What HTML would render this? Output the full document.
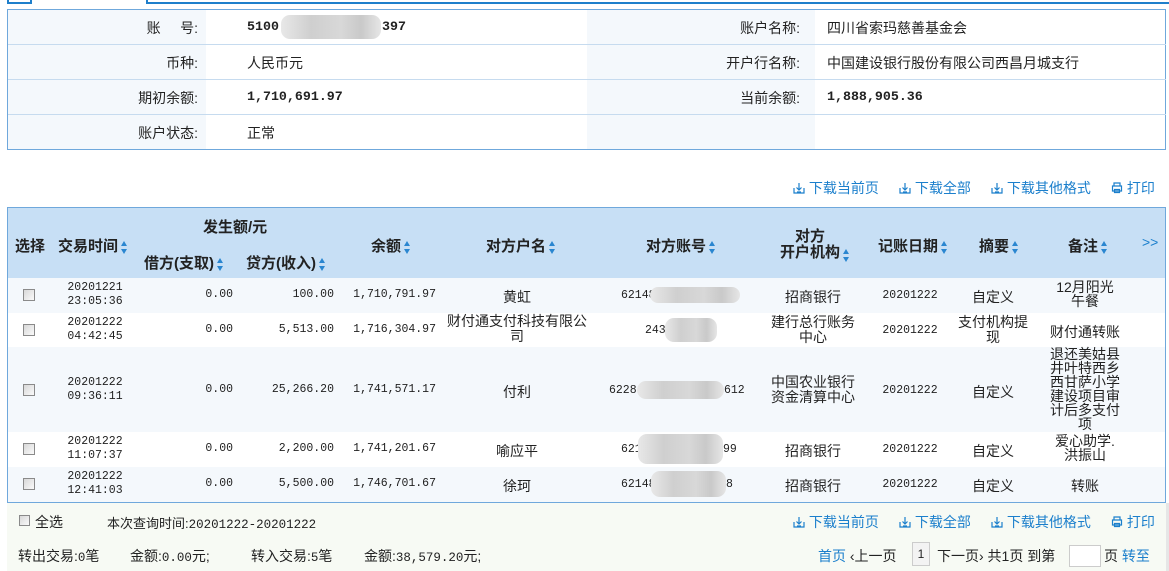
<!DOCTYPE html>
<html><head><meta charset="utf-8"><style>
*{margin:0;padding:0;box-sizing:border-box}
body{width:1169px;height:571px;overflow:hidden;background:#fff;position:relative;font-family:"Liberation Sans","Noto Sans CJK SC",sans-serif;font-size:14px;color:#222}
.a{position:absolute;white-space:nowrap}
.m{font-family:"Liberation Mono","Noto Sans CJK SC",monospace;font-size:11.5px}
.mi{font-family:"Liberation Mono",monospace;font-size:13.3px;font-weight:bold}
.b{font-weight:bold}
.c{text-align:center}
.r{text-align:right}
.lk{color:#1b7fcc}
.blur{position:absolute;background:linear-gradient(90deg,#e8e8e8,#cfcfcf 30%,#d8d8d8 60%,#c9c9c9 80%,#e6e6e6);border-radius:9px}
.cb{position:absolute;width:12px;height:12px;border:1px solid #8a8a8a;background:linear-gradient(135deg,#d8d8d8,#fafafa);left:23px}
.sa{display:inline-block;vertical-align:middle;margin-left:3px}
.hl{position:absolute;left:8px;width:1158px;height:1px;background:#c6dbef}
</style></head><body>
<!-- tabs -->
<div class="a" style="left:7px;top:0;width:2px;height:4px;background:#1f7fcb"></div>
<div class="a" style="left:7px;top:2px;width:24px;height:2px;background:#1f7fcb"></div>
<div class="a" style="left:30px;top:0;width:2px;height:4px;background:#1f7fcb"></div>
<div class="a" style="left:146px;top:0;width:2px;height:4px;background:#1f7fcb"></div>
<div class="a" style="left:146px;top:2px;width:1023px;height:2px;background:#1f7fcb"></div>

<!-- info box -->
<div class="a" style="left:7px;top:9px;width:1159px;height:141px;border:1px solid #6fa8dc;background:#fff"></div>
<div class="a" style="left:8px;top:10px;width:198px;height:139px;background:#f4f8fc"></div>
<div class="a" style="left:587px;top:10px;width:228px;height:139px;background:#f4f8fc"></div>
<div class="hl" style="top:44px"></div>
<div class="hl" style="top:79px"></div>
<div class="hl" style="top:114px"></div>
<div class="a r" style="left:8px;width:190px;top:18px">账&nbsp;&nbsp;&nbsp;&nbsp;&nbsp;号:</div>
<div class="a r" style="left:8px;width:190px;top:53px">币种:</div>
<div class="a r" style="left:8px;width:190px;top:88px">期初余额:</div>
<div class="a r" style="left:8px;width:190px;top:123px">账户状态:</div>
<div class="a mi" style="left:247px;top:19px">5100</div>
<div class="blur" style="left:281px;top:15px;width:100px;height:24px"></div>
<div class="a mi" style="left:382px;top:19px">397</div>
<div class="a" style="left:247px;top:53px">人民币元</div>
<div class="a mi" style="left:247px;top:89px">1,710,691.97</div>
<div class="a" style="left:247px;top:123px">正常</div>
<div class="a r" style="left:590px;width:210px;top:18px">账户名称:</div>
<div class="a r" style="left:590px;width:210px;top:53px">开户行名称:</div>
<div class="a r" style="left:590px;width:210px;top:88px">当前余额:</div>
<div class="a" style="left:827px;top:18px">四川省索玛慈善基金会</div>
<div class="a" style="left:827px;top:53px">中国建设银行股份有限公司西昌月城支行</div>
<div class="a mi" style="left:827px;top:89px">1,888,905.36</div>

<svg width="0" height="0" style="position:absolute"><defs>
<g id="dl"><path d="M1 6v5h10V6M6 1v7M3.5 5.5L6 8l2.5-2.5M4 10h4" fill="none" stroke="#1b7fcc" stroke-width="1.2"/></g>
<g id="pr"><path d="M3 4V1h6v3M1.5 4h9v5h-9zM3.5 7.5h5v3h-5z" fill="none" stroke="#1b7fcc" stroke-width="1.2"/></g>
<g id="sa"><path d="M3 0L6 5H0z" fill="#2a86d0"/><path d="M0 8h6L3 13z" fill="#2a86d0"/></g>
</defs></svg>
<div class="a lk" style="left:793px;top:178px"><svg width="12" height="12" style="vertical-align:-1px"><use href="#dl"/></svg> 下载当前页</div>
<div class="a lk" style="left:899px;top:178px"><svg width="12" height="12" style="vertical-align:-1px"><use href="#dl"/></svg> 下载全部</div>
<div class="a lk" style="left:991px;top:178px"><svg width="12" height="12" style="vertical-align:-1px"><use href="#dl"/></svg> 下载其他格式</div>
<div class="a lk" style="left:1111px;top:178px"><svg width="12" height="12" style="vertical-align:-1px"><use href="#pr"/></svg> 打印</div>

<!-- table -->
<div class="a" style="left:7px;top:207px;width:1159px;height:296px;border:1px solid #6fa8dc;background:#fff"></div>
<div class="a" style="left:8px;top:208px;width:1157px;height:70px;background:#c7dff5"></div>
<div class="a" style="left:8px;top:278px;width:1157px;height:35px;background:#f4f8fc"></div>
<div class="a" style="left:8px;top:347px;width:1157px;height:85px;background:#f4f8fc"></div>
<div class="a" style="left:8px;top:467px;width:1157px;height:35px;background:#f4f8fc"></div>

<div class="a b" style="left:15px;top:235px;font-size:15px">选择</div>
<div class="a b" style="left:58px;top:235px;font-size:15px">交易时间<svg class="sa" width="6" height="13"><use href="#sa"/></svg></div>
<div class="a b" style="left:203px;top:216px;font-size:15px">发生额/元</div>
<div class="a b" style="left:144px;top:252px;font-size:15px">借方(支取)<svg class="sa" width="6" height="13"><use href="#sa"/></svg></div>
<div class="a b" style="left:246px;top:252px;font-size:15px">贷方(收入)<svg class="sa" width="6" height="13"><use href="#sa"/></svg></div>
<div class="a b" style="left:371px;top:235px;font-size:15px">余额<svg class="sa" width="6" height="13"><use href="#sa"/></svg></div>
<div class="a b" style="left:486px;top:235px;font-size:15px">对方户名<svg class="sa" width="6" height="13"><use href="#sa"/></svg></div>
<div class="a b" style="left:646px;top:235px;font-size:15px">对方账号<svg class="sa" width="6" height="13"><use href="#sa"/></svg></div>
<div class="a b c" style="left:780px;width:60px;top:229px;line-height:16px;font-size:15px">对方<br>开户机构</div>
<svg class="a" style="left:843px;top:249px" width="6" height="13"><use href="#sa"/></svg>
<div class="a b" style="left:878px;top:235px;font-size:15px">记账日期<svg class="sa" width="6" height="13"><use href="#sa"/></svg></div>
<div class="a b" style="left:979px;top:235px;font-size:15px">摘要<svg class="sa" width="6" height="13"><use href="#sa"/></svg></div>
<div class="a b" style="left:1068px;top:235px;font-size:15px">备注<svg class="sa" width="6" height="13"><use href="#sa"/></svg></div>
<div class="a lk" style="left:1142px;top:234px;font-size:14px">&gt;&gt;</div>

<div class="cb" style="top:289px"></div>
<div class="cb" style="top:324px"></div>
<div class="cb" style="top:384px"></div>
<div class="cb" style="top:443px"></div>
<div class="cb" style="top:478px"></div>

<div class="a m c" style="left:60px;width:70px;top:281px;line-height:14px">20201221<br>23:05:36</div>
<div class="a m c" style="left:60px;width:70px;top:316px;line-height:14px">20201222<br>04:42:45</div>
<div class="a m c" style="left:60px;width:70px;top:376px;line-height:14px">20201222<br>09:36:11</div>
<div class="a m c" style="left:60px;width:70px;top:435px;line-height:14px">20201222<br>11:07:37</div>
<div class="a m c" style="left:60px;width:70px;top:470px;line-height:14px">20201222<br>12:41:03</div>

<div class="a m r" style="left:150px;width:83px;top:288px">0.00</div>
<div class="a m r" style="left:150px;width:83px;top:323px">0.00</div>
<div class="a m r" style="left:150px;width:83px;top:383px">0.00</div>
<div class="a m r" style="left:150px;width:83px;top:442px">0.00</div>
<div class="a m r" style="left:150px;width:83px;top:477px">0.00</div>

<div class="a m r" style="left:240px;width:94px;top:288px">100.00</div>
<div class="a m r" style="left:240px;width:94px;top:323px">5,513.00</div>
<div class="a m r" style="left:240px;width:94px;top:383px">25,266.20</div>
<div class="a m r" style="left:240px;width:94px;top:442px">2,200.00</div>
<div class="a m r" style="left:240px;width:94px;top:477px">5,500.00</div>

<div class="a m r" style="left:340px;width:96px;top:288px">1,710,791.97</div>
<div class="a m r" style="left:340px;width:96px;top:323px">1,716,304.97</div>
<div class="a m r" style="left:340px;width:96px;top:383px">1,741,571.17</div>
<div class="a m r" style="left:340px;width:96px;top:442px">1,741,201.67</div>
<div class="a m r" style="left:340px;width:96px;top:477px">1,746,701.67</div>

<div class="a c" style="left:447px;width:140px;top:287px">黄虹</div>
<div class="a c" style="left:447px;width:140px;top:314px;line-height:15px;white-space:normal">财付通支付科技有限公司</div>
<div class="a c" style="left:447px;width:140px;top:382px">付利</div>
<div class="a c" style="left:447px;width:140px;top:441px">喻应平</div>
<div class="a c" style="left:447px;width:140px;top:476px">徐珂</div>

<div class="a m" style="left:621px;top:289px">62148</div><div class="blur" style="left:650px;top:287px;width:90px;height:16px"></div>
<div class="a m" style="left:645px;top:324px">243</div><div class="blur" style="left:665px;top:318px;width:52px;height:24px"></div>
<div class="a m" style="left:609px;top:384px">6228</div><div class="blur" style="left:637px;top:381px;width:87px;height:18px"></div><div class="a m" style="left:724px;top:384px">612</div>
<div class="a m" style="left:621px;top:443px">621</div><div class="blur" style="left:638px;top:434px;width:85px;height:30px"></div><div class="a m" style="left:723px;top:443px">99</div>
<div class="a m" style="left:621px;top:478px">62148</div><div class="blur" style="left:651px;top:471px;width:75px;height:26px"></div><div class="a m" style="left:726px;top:478px">8</div>

<div class="a c" style="left:768px;width:90px;top:287px">招商银行</div>
<div class="a c" style="left:768px;width:90px;top:315px;line-height:15px">建行总行账务<br>中心</div>
<div class="a c" style="left:758px;width:110px;top:375px;line-height:15px">中国农业银行<br>资金清算中心</div>
<div class="a c" style="left:768px;width:90px;top:441px">招商银行</div>
<div class="a c" style="left:768px;width:90px;top:476px">招商银行</div>

<div class="a m c" style="left:870px;width:80px;top:289px">20201222</div>
<div class="a m c" style="left:870px;width:80px;top:324px">20201222</div>
<div class="a m c" style="left:870px;width:80px;top:384px">20201222</div>
<div class="a m c" style="left:870px;width:80px;top:443px">20201222</div>
<div class="a m c" style="left:870px;width:80px;top:478px">20201222</div>

<div class="a c" style="left:953px;width:80px;top:287px">自定义</div>
<div class="a c" style="left:953px;width:80px;top:315px;line-height:15px">支付机构提<br>现</div>
<div class="a c" style="left:953px;width:80px;top:382px">自定义</div>
<div class="a c" style="left:953px;width:80px;top:441px">自定义</div>
<div class="a c" style="left:953px;width:80px;top:476px">自定义</div>

<div class="a c" style="left:1040px;width:90px;top:280px;line-height:14px">12月阳光<br>午餐</div>
<div class="a c" style="left:1040px;width:90px;top:322px">财付通转账</div>
<div class="a c" style="left:1040px;width:90px;top:347px;line-height:14px">退还美姑县<br>井叶特西乡<br>西甘萨小学<br>建设项目审<br>计后多支付<br>项</div>
<div class="a c" style="left:1040px;width:90px;top:434px;line-height:14px">爱心助学.<br>洪振山</div>
<div class="a c" style="left:1040px;width:90px;top:476px">转账</div>

<!-- footer -->
<div class="a" style="left:7px;top:503px;width:1159px;height:68px;background:#f7faf4"></div>
<div class="a" style="left:1166px;top:503px;width:3px;height:68px;background:#e6e6e6"></div>
<div class="cb" style="left:19px;top:515px;width:11px;height:11px"></div>
<div class="a" style="left:35px;top:512px">全选</div>
<div class="a" style="left:107px;top:513px;font-size:13px">本次查询时间:<span class="m" style="font-size:12.5px">20201222-20201222</span></div>
<div class="a lk" style="left:793px;top:512px"><svg width="12" height="12" style="vertical-align:-1px"><use href="#dl"/></svg> 下载当前页</div>
<div class="a lk" style="left:899px;top:512px"><svg width="12" height="12" style="vertical-align:-1px"><use href="#dl"/></svg> 下载全部</div>
<div class="a lk" style="left:991px;top:512px"><svg width="12" height="12" style="vertical-align:-1px"><use href="#dl"/></svg> 下载其他格式</div>
<div class="a lk" style="left:1111px;top:512px"><svg width="12" height="12" style="vertical-align:-1px"><use href="#pr"/></svg> 打印</div>

<div class="a" style="left:18px;top:546px">转出交易:<span class="m" style="font-size:12.5px">0</span>笔</div>
<div class="a" style="left:130px;top:546px">金额:<span class="m" style="font-size:12.5px">0.00</span>元;</div>
<div class="a" style="left:251px;top:546px">转入交易:<span class="m" style="font-size:12.5px">5</span>笔</div>
<div class="a" style="left:364px;top:546px">金额:<span class="m" style="font-size:12.5px">38,579.20</span>元;</div>
<div class="a" style="left:818px;top:546px"><span class="lk">首页</span> ‹上一页</div>
<div class="a" style="left:912px;top:542px;width:18px;height:24px;border:1px solid #ccc;background:#f3f3f3;font-size:12px;text-align:center;line-height:22px">1</div>
<div class="a" style="left:937px;top:546px">下一页› 共1页 到第</div>
<div class="a" style="left:1069px;top:545px;width:32px;height:22px;border:1px solid #ccc;background:#fff"></div>
<div class="a" style="left:1104px;top:546px">页 <span class="lk">转至</span></div>
</body></html>
